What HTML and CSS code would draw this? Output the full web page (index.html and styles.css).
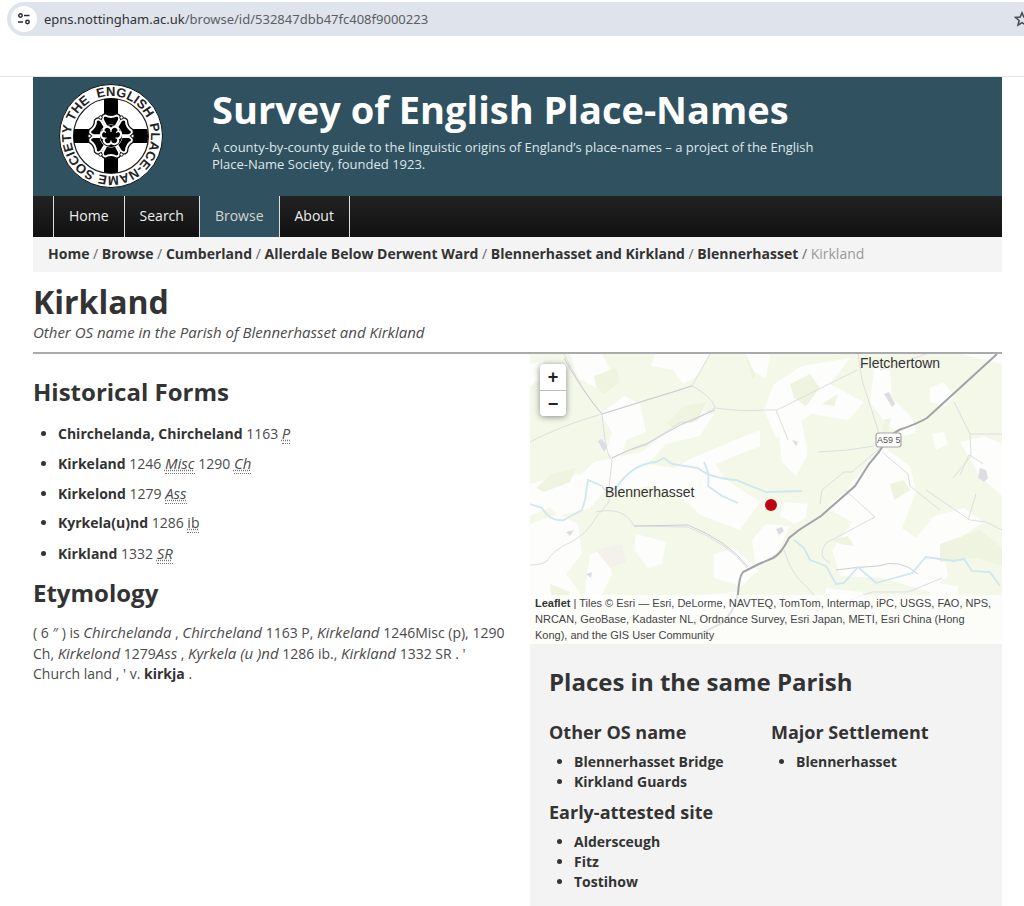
FILE: index.html
```html
<!DOCTYPE html>
<html lang="en">
<head>
<meta charset="utf-8">
<meta name="viewport" content="width=device-width, initial-scale=1">
<title>Kirkland - Survey of English Place-Names</title>
<link rel="stylesheet" href="styles.css">
</head>
<body>
<div class="browser-bar">
  <div class="address">
    <button class="site-info" type="button" aria-label="View site information">
      <svg width="14" height="14" viewBox="0 0 14 14" fill="none" stroke="#2b2d30" stroke-width="1.5"><circle cx="3.5" cy="3.5" r="1.7"/><path d="M7 3.5h5.5M1 10h5"/><circle cx="10.5" cy="10" r="1.7"/></svg>
    </button>
    <span class="url"><span class="host">epns.nottingham.ac.uk</span>/browse/id/532847dbb47fc408f9000223</span>
    <button class="bookmark" type="button" aria-label="Bookmark this page">
      <svg width="16" height="16" viewBox="0 0 16 16" fill="none" stroke="#45484d" stroke-width="1.5"><path d="M8 1.8l1.8 4.3 4.7.4-3.6 3 1.1 4.6L8 11.6l-4 2.5 1.1-4.6-3.6-3 4.7-.4z"/></svg>
    </button>
  </div>
</div>
<div class="page">
  <header class="masthead">
    <svg class="seal" viewBox="0 0 104 104" role="img" aria-label="The English Place-Name Society">
      <defs>
        <path id="ring" d="M52 92a40 40 0 1 1 .01 0"/>
        <path id="petal" d="M-4.500-9.500L-8-16q-1-4 2.500-4.500q2.500 1.500 5.500 1.500t5.500-1.500q3.500.5 2.500 4.500l-3.500 6.500q-4.500-2-9 0z"/>
      </defs>
      <circle cx="52" cy="52" r="51.500" fill="#fff" stroke="#111" stroke-width="1"/>
      <circle cx="52" cy="52" r="37.500" fill="#fff" stroke="#222" stroke-width="1.200"/>
      <path d="M45 15q7-1.500 14 0v30h29.500q1 7 0 14H59v29.500q-7 1-14 0V59H15q-1-7 0-14h30z" fill="#000"/>
      <g transform="translate(52 52)">
        <circle r="18" fill="#111"/>
        <g fill="none" stroke="#111" stroke-width="4.500" stroke-linejoin="round">
          <use href="#petal"/><use href="#petal" transform="rotate(60)"/><use href="#petal" transform="rotate(120)"/><use href="#petal" transform="rotate(180)"/><use href="#petal" transform="rotate(240)"/><use href="#petal" transform="rotate(300)"/>
        </g>
        <g fill="#000" stroke="#fff" stroke-width="2" stroke-linejoin="round">
          <use href="#petal"/><use href="#petal" transform="rotate(60)"/><use href="#petal" transform="rotate(120)"/><use href="#petal" transform="rotate(180)"/><use href="#petal" transform="rotate(240)"/><use href="#petal" transform="rotate(300)"/>
        </g>
        <g fill="#fff" stroke="#111" stroke-width="1">
          <circle cx="10.500" cy="-18.500" r="1.700"/><circle cx="-10.500" cy="-18.500" r="1.700"/><circle cx="10.500" cy="18.500" r="1.700"/><circle cx="-10.500" cy="18.500" r="1.700"/><circle cx="21.500" r="1.700"/><circle cx="-21.500" r="1.700"/>
        </g>
        <circle r="11" fill="#000"/>
        <path d="M0-7q2-3 5-2t2.500 4q3 1 2.500 4t-3 3.500q1 3.500-1.500 5T0 7q-3 2.500-5.500.5T-7 2.500q-3-.5-3-3.500t2.500-4q-.5-3 2.500-4t5 2z" fill="#000" stroke="#fff" stroke-width="2"/>
        <path d="M0-7v3M7.500-5L5-3.500M7 2.500L4.500 1.800M0 7V4.500M-7 2.500l2.500-.7M-7.500-5L-5-3.500" stroke="#fff" stroke-width="1.200" fill="none"/>
      </g>
      <g class="seal-text" text-anchor="middle">
        <text transform="rotate(-50 52 52)"><textPath href="#ring" startOffset="50%">THE</textPath></text>
        <text transform="rotate(22 52 52)"><textPath href="#ring" startOffset="50%">ENGLISH</textPath></text>
        <text transform="rotate(135 52 52)"><textPath href="#ring" startOffset="50%">PLACE-NAME</textPath></text>
        <text transform="rotate(244 52 52)"><textPath href="#ring" startOffset="50%">SOCIETY</textPath></text>
      </g>
    </svg>
    <div class="brand">
      <p class="site-title">Survey of English Place-Names</p>
      <p class="tagline">A county-by-county guide to the linguistic origins of England’s place-names – a project of the English Place-Name Society, founded 1923.</p>
    </div>
  </header>
  <nav class="main-nav" aria-label="Main">
    <a href="#">Home</a><a href="#">Search</a><a class="current" href="#" aria-current="page">Browse</a><a href="#">About</a>
  </nav>
  <nav class="crumbs" aria-label="Breadcrumb"><a href="#">Home</a> / <a href="#">Browse</a> / <a href="#">Cumberland</a> / <a href="#">Allerdale Below Derwent Ward</a> / <a href="#">Blennerhasset and Kirkland</a> / <a href="#">Blennerhasset</a> / <span class="here">Kirkland</span></nav>
  <main>
    <div class="heading">
      <h1>Kirkland</h1>
      <p>Other OS name in the Parish of Blennerhasset and Kirkland</p>
    </div>
    <div class="columns">
      <section class="entry">
        <h2>Historical Forms</h2>
        <ul class="forms">
          <li><b>Chirchelanda, Chircheland</b> 1163 <abbr><i>P</i></abbr></li>
          <li><b>Kirkeland</b> 1246 <abbr><i>Misc</i></abbr> 1290 <abbr><i>Ch</i></abbr></li>
          <li><b>Kirkelond</b> 1279 <abbr><i>Ass</i></abbr></li>
          <li><b>Kyrkela(u)nd</b> 1286 <abbr>ib</abbr></li>
          <li><b>Kirkland</b> 1332 <abbr><i>SR</i></abbr></li>
        </ul>
        <h2>Etymology</h2>
        <p class="etymology">( 6 ″ ) is <i>Chirchelanda</i> , <i>Chircheland</i> 1163 P, <i>Kirkeland</i> 1246Misc (p), 1290 Ch, <i>Kirkelond</i> 1279<i>Ass</i> , <i>Kyrkela (u )nd</i> 1286 ib., <i>Kirkland</i> 1332 SR . ' Church land , ' v. <a href="#">kirkja</a> .</p>
      </section>
      <aside class="side">
        <div class="map">
          <svg class="tiles" viewBox="0 0 472 290" preserveAspectRatio="xMidYMid slice" role="img" aria-label="Map of Blennerhasset and Fletchertown">
            <rect width="472" height="290" fill="#f4f8e9"/>
            <g fill="#fdfdfb">
              <path d="M40 0h32l12 22-18 12-18-10zM0 10l14-4-4 20-10 6zM125 0h55l-12 22-15 8-10-14-22-4zM70 60l24-18 16 8 6 28-20 8-6 20-14-8 6-20z"/>
              <path d="M64 108l48-10 34-28 24-14 14 4-14 22-34 8-18 20 26 4 18-10 68-28v16l-44 18 8 14 36 24-20 28-38-14-22-20-26-10-50 6-14 16-32 8-16-18 32-16z"/>
              <path d="M0 130l30-8 28-2-4 20-22 8-32 14zM0 170l28-10 20 10 4 30-16 20 14 18-24 26-26-14zM60 200l16-4 6 24-14 28-14 8 2-28zM106 180l30 8-4 22-14 4-14-18z"/>
              <path d="M216 0h24l-4 24-12-6zM244 30l28-18 48-8-20 26 34 18-16 18-36-6-36 24-12-28zM248 74l22-14 8 40-12 22-14-14z"/>
              <path d="M344 14l16 2 2 28 20 20 4 14-10 4-18-10-18-24zM400 34l14-6 10 14-8 10-16-4zM402 80l12-2 4 12-12 6zM430 0h42v10zM352 92l28 20 6 26-14 36 14 10 18-22 30-8 20 14-40 26 4 28-18 16-48-14-42-2-8-26 20-28-22-12z"/>
              <path d="M254 148l24 2-2 14-12 6-14-8zM236 170l24 2-12 26-22 16-4-28zM184 200l20-6 24 22-16 16-28-8zM296 234l36 4 6 14-44-4zM400 228l28 4v18h-28zM430 88l24-6 18 8v52l-22-20zM300 150l52-40 12 12-34 40zM136 244l70-6 6 16-76 10z"/>
            </g>
            <g fill="#eef4df">
              <path d="M64 22l22-8 4 14-16 12-8-8zM6 134l16-14 24-6-6 14-26 10zM260 30l20-10 10 14-14 18-12-8zM302 186l16-4 6 10-14-2zM292 50l16-10-4 12zM136 70l18-18 22-4-8 18-24 8zM354 66l7-2-3 14-6 4zM216 2l10 20-4 4z"/>
              <path d="M20 230l20 8-4 14-14-2zM410 190l40-14 22 18v18l-24-8-38 4zM360 130l14-4 6 10-16 10z"/>
            </g>
            <path d="M66 196l26-6 4 18-16 6z" fill="#f4f0ec"/>
            <g fill="none" stroke="#dfdde1" stroke-width="1">
              <path d="M34 0q20 40 38 60q40-12 90-28l18-32M0 88q30-16 72-28l3 26q3 18 7 20l-3 28v14l-12 14q-10 18-26 26-18 8-24 19-6 4-17 4"/>
              <path d="M162 32q20 10 23 22l-24 14h-10l-35 23q-16 4-34 13M185 54q30 4 50 2h12l80-40M246 56l12 30M328 0l4 26 16 50v12M350 16l46-16M288 98l30-2 26-4M352 98l26 22 2 12 30 24M424 48l16 32h32M440 80l1 22-18 22M441 102l12 8M441 102l-2-1-9 20M350 94l-28 24h-8l-22 18-2 14M315 136l30 27-49 26q-10 14 4 20M396 136l44 30 16 2 16 8M438 166l8-26"/>
              <path d="M66 158q28-6 38 14l54 1q40 16 60 42M254 196q8 26 22 36l14 16M320 246l22-8h36l34-14"/>
            </g>
            <g fill="none" stroke="#cfccd3" stroke-width="1">
              <path d="M34 4q20 36 38 56q44-14 90-28M82 104q20-10 34-14l36-20 33-14M104 172l54-1q40 16 60 42"/>
              <path d="M306 216q20-3 42-4 22-8 40 8"/>
            </g>
            <g fill="#dedce2"><path d="M68 87l4-2 5 8-3 5zM354 40l5-2 6 12-3 3zM450 114l6 2 2 8-4 4-6-4zM56 220l6-2-1 6zM246 175l6-2 2 4-5 4zM262 86l6 2-2 4zM36 178l8-2-4 6z"/></g>
            <g fill="none" stroke="#cfe7ef" stroke-width="1.800">
              <path d="M0 150l12 4q8 14 22 12l18-10 3-10 3-20 14 6q3 8 14 2 16-24 40-26l8-4 8 6 26 4q12 10 38 12l30 12 36-1M174 108q6 12 4 24l14 10 16 7"/>
              <path d="M264 186l10 8 6 12 16 6 10 18 8-1 14-16 18 16 22-6 14-4 14-16 28 4 10-2 8 12 18 1 10 14"/>
            </g>
            <path d="M467 0l-70 64q-8 5-28 12-10 5-20 22l-10 12-14 22-34 30-22 14-10 8q-8 16-16 20l-14 6-16 8q-4 5-5 22-4 20-18 30l-20 10" fill="none" stroke="#a2a1a5" stroke-width="2"/>
            <g class="place-label"><text x="330" y="14">Fletchertown</text><text x="75" y="143">Blennerhasset</text></g>
            <rect x="346" y="79" width="25" height="14" rx="3" fill="#fff" stroke="#a5a5a5" stroke-width="1.200"/>
            <text class="road-label" x="347" y="89">A59 5</text>
            <circle cx="241" cy="151" r="6" fill="#be0712"/>
          </svg>
          <div class="zoom"><button type="button" aria-label="Zoom in">+</button><button type="button" aria-label="Zoom out">−</button></div>
          <p class="attribution"><a href="#">Leaflet</a> | Tiles © Esri — Esri, DeLorme, NAVTEQ, TomTom, Intermap, iPC, USGS, FAO, NPS, NRCAN, GeoBase, Kadaster NL, Ordnance Survey, Esri Japan, METI, Esri China (Hong Kong), and the GIS User Community</p>
        </div>
        <section class="parish">
          <h2>Places in the same Parish</h2>
          <div class="groups">
            <div>
              <h3>Other OS name</h3>
              <ul><li><a href="#">Blennerhasset Bridge</a></li><li><a href="#">Kirkland Guards</a></li></ul>
              <h3>Early-attested site</h3>
              <ul><li><a href="#">Aldersceugh</a></li><li><a href="#">Fitz</a></li><li><a href="#">Tostihow</a></li></ul>
            </div>
            <div>
              <h3>Major Settlement</h3>
              <ul><li><a href="#">Blennerhasset</a></li></ul>
            </div>
          </div>
        </section>
      </aside>
    </div>
  </main>
</div>
</body>
</html>
```
FILE: styles.css
```css
* { box-sizing: border-box; }
body {
  margin: 0;
  background: #fff;
  color: #4b4b4b;
  font: 14px/20px "Open Sans", sans-serif;
}
h1, h2, h3, p, ul { margin: 0; }
h1, h2, h3, b { color: #333; font-weight: 700; }
a { color: #333; font-weight: 700; text-decoration: none; }
i, .heading p { font-size: 15px; font-style: italic; }
button { border: 0; padding: 0; cursor: pointer; }

.browser-bar {
  height: 77px;
  padding: 2px 0 0 7px;
  border-bottom: 1px solid #e2e4e5;
  overflow: hidden;
}
.address {
  display: flex;
  align-items: center;
  height: 34px;
  margin-right: -14px;
  padding: 0 4px;
  border-radius: 17px;
  background: #dfe3eb;
}
.site-info {
  display: grid;
  place-items: center;
  width: 26px;
  height: 26px;
  border-radius: 50%;
  background: #fff;
}
.url {
  flex: 1;
  margin-left: 7px;
  color: #5b5e63;
  font: 13px/18px "Noto Sans", sans-serif;
}
.host { color: #303236; }
.bookmark { display: grid; background: none; margin-right: 4px; }

.page { padding: 0 22px 0 33px; }
.masthead {
  display: flex;
  gap: 49px;
  height: 119px;
  padding: 7px 26px;
  background: #2f5160;
  color: #fff;
}
.seal { flex: none; width: 104px; height: 104px; }
.seal-text { fill: #222; font: bold 13px "Liberation Sans", sans-serif; }
.brand { max-width: 620px; }
.site-title { font-size: 38px; font-weight: 700; line-height: 50px; }
.tagline { margin-top: 5px; color: #dfe6e9; font-size: 13px; line-height: 17px; }

.main-nav {
  display: flex;
  height: 41px;
  padding-left: 20px;
  background: linear-gradient(#222, #111);
}
.main-nav a {
  padding: 10px 15px;
  border-left: 1px solid #ddd;
  color: #eee;
  font-weight: 400;
}
.main-nav a:last-child { border-right: 1px solid #ddd; }
.main-nav .current { background: #2f5160; color: #d5d5cb; }

.crumbs { padding: 7px 15px 8px; background: #f4f4f4; color: #666; }
.here { color: #999; }

.heading { padding: 10px 0; border-bottom: 2px solid #aaa; }
.heading h1 { font-size: 32px; line-height: 40px; }
.columns { display: grid; grid-template-columns: 497fr 472fr; }
h2 { font-size: 24px; line-height: 40px; }

.entry { padding: 18px 24px 0 0; }
.forms { margin: 6px 0 5px; padding-left: 25px; }
.forms li { height: 30px; padding: 5px 0; }
li::marker { color: #333; }
abbr { border-bottom: 1px dotted #777; text-decoration: underline dotted #777; }
.etymology { margin-top: 9px; }

.map { display: grid; min-height: 290px; }
.map > * { grid-area: 1 / 1; }
.tiles { width: 100%; height: 100%; }
.place-label { fill: #333; font: 14px "Liberation Sans", sans-serif; }
.road-label { fill: #555; font: 9px "Liberation Sans", sans-serif; }
.zoom {
  z-index: 1;
  display: grid;
  align-self: start;
  justify-self: start;
  margin: 10px;
  border-radius: 4px;
  background: #fff;
  box-shadow: 0 1px 6px #888;
}
.zoom button {
  width: 26px;
  height: 26px;
  background: none;
  color: #222;
  font: bold 18px/26px "Liberation Sans", sans-serif;
}
.zoom button + button { border-top: 1px solid #bbb; line-height: 24px; }
.attribution {
  z-index: 1;
  align-self: end;
  padding: 0 5px 1px;
  background: rgba(255, 255, 255, .7);
  color: #444;
  font: 11px/16px "Liberation Sans", sans-serif;
}

.parish { min-height: 262px; padding: 18px 19px; background: #f3f3f3; }
.groups { display: grid; grid-template-columns: 222px 1fr; margin-top: 20px; }
.groups h3 { font-size: 18px; line-height: 20px; }
.groups ul { margin: 10px 0; padding-left: 25px; }
```
